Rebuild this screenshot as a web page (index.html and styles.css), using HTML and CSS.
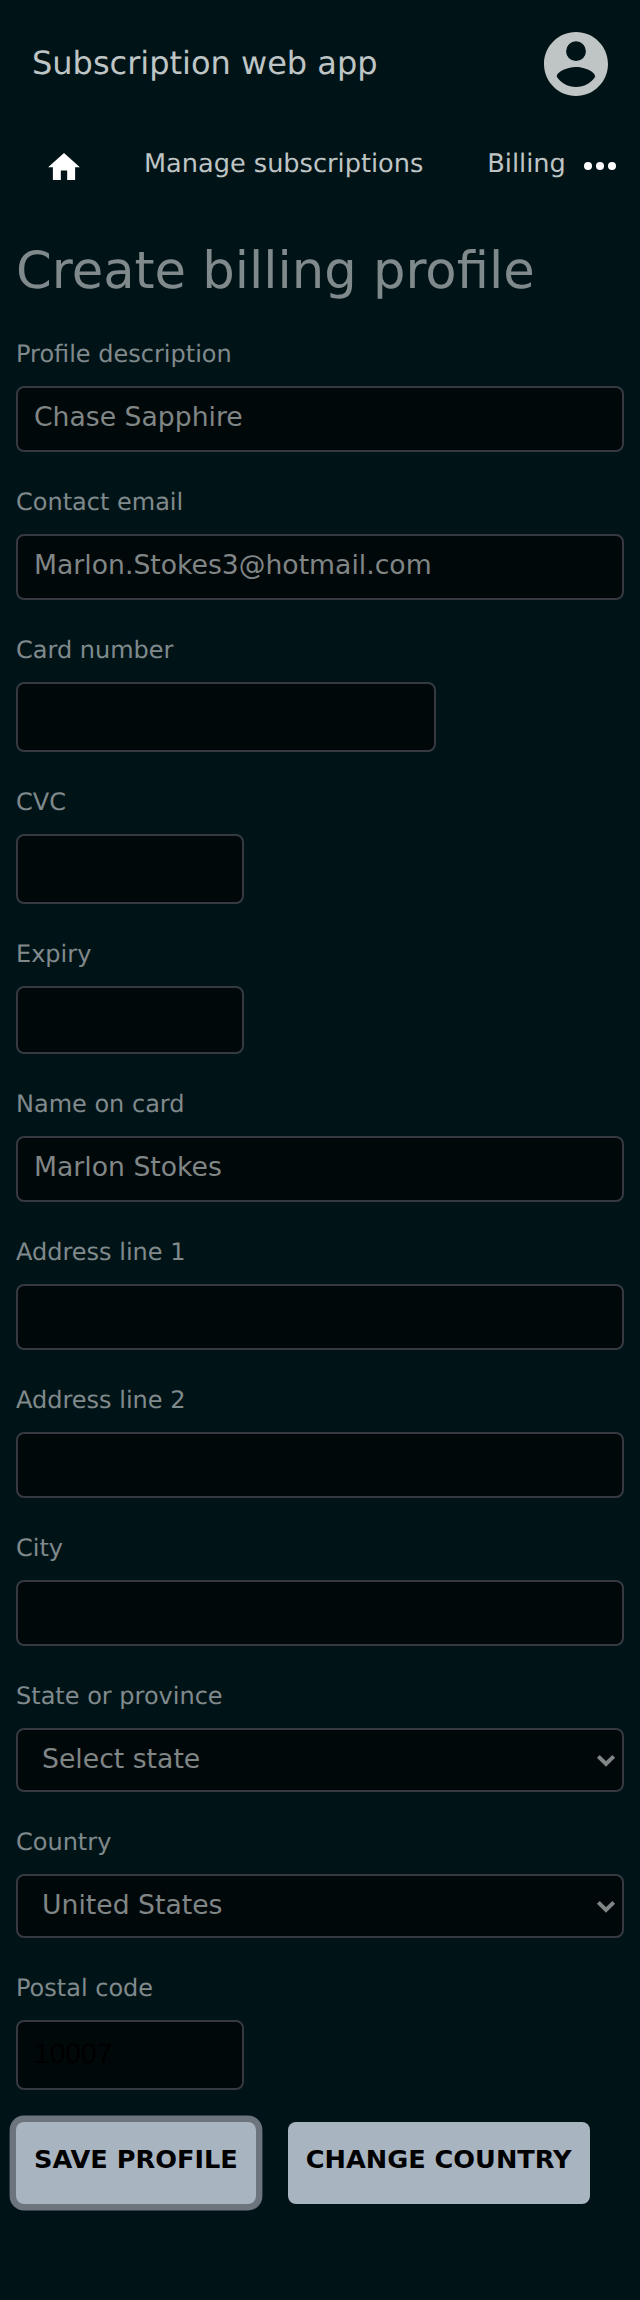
FILE: index.html
```html
<!DOCTYPE html>
<html lang="en">
<head>
<meta charset="utf-8">
<title>Create billing profile</title>
<link rel="stylesheet" href="styles.css">
</head>
<body>
<header class="header">
  <span class="brand">Subscription web app</span>
  <svg class="avatar" viewBox="2 2 20 20"><path d="M12 2C6.48 2 2 6.48 2 12s4.48 10 10 10 10-4.48 10-10S17.52 2 12 2zm0 2.9a3.1 3.1 0 1 1 0 6.2 3.1 3.1 0 0 1 0-6.2zm0 14.3c-2.5 0-4.71-1.28-6-3.22.03-1.99 4-3.08 6-3.08 1.99 0 5.97 1.09 6 3.08-1.29 1.94-3.5 3.22-6 3.22z"/></svg>
</header>
<nav class="nav">
  <svg class="home" viewBox="2 3 20 17"><path d="M10 20v-6h4v6h5v-8h3L12 3 2 12h3v8z"/></svg>
  <a class="link link-manage">Manage subscriptions</a>
  <a class="link">Billing</a>
  <svg class="more" viewBox="0 0 32 8"><circle cx="4" cy="4" r="4"/><circle cx="16" cy="4" r="4"/><circle cx="28" cy="4" r="4"/></svg>
</nav>
<main class="main">
  <h1 class="title">Create billing profile</h1>
  <form class="form">
    <label class="field">Profile description<input class="input" value="Chase Sapphire"></label>
    <label class="field">Contact email<input class="input" value="Marlon.Stokes3@hotmail.com"></label>
    <label class="field">Card number<span class="input hosted card"></span></label>
    <label class="field">CVC<span class="input hosted short"></span></label>
    <label class="field">Expiry<span class="input expiry short"></span></label>
    <label class="field">Name on card<input class="input" value="Marlon Stokes"></label>
    <label class="field">Address line 1<input class="input"></label>
    <label class="field">Address line 2<input class="input"></label>
    <label class="field">City<input class="input"></label>
    <label class="field">State or province
      <span class="select-wrap"><select class="input select"><option>Select state</option></select><svg class="chevron" viewBox="0 0 20 14"><path d="M2.3 2.3 10 10 17.7 2.3"/></svg></span>
    </label>
    <label class="field">Country
      <span class="select-wrap"><select class="input select"><option>United States</option></select><svg class="chevron" viewBox="0 0 20 14"><path d="M2.3 2.3 10 10 17.7 2.3"/></svg></span>
    </label>
    <label class="field">Postal code<span class="input hosted short postal">10007</span></label>
  </form>
  <div class="actions">
    <button class="button focused">SAVE PROFILE</button>
    <button class="button">CHANGE COUNTRY</button>
  </div>
</main>
</body>
</html>
```

FILE: styles.css
```css
* { box-sizing: border-box; }
body {
  margin: 0;
  min-height: 2300px;
  background: #001418;
  color: #808a8c;
  font-family: "DejaVu Sans", sans-serif;
  text-rendering: geometricPrecision;
}
.header {
  display: flex;
  align-items: center;
  justify-content: space-between;
  height: 128px;
  padding: 0 32px;
}
.brand { font-size: 32px; line-height: 40px; padding-bottom: 2px; color: #bfc4c5; }
.avatar { width: 64px; height: 64px; fill: #bfc4c5; }
.nav { display: flex; align-items: flex-start; height: 96px; padding: 16px 24px 0 48px; }
.home { width: 32px; height: 27px; margin: 9px 64px 0 0; fill: #fff; }
.link { font-size: 25.6px; line-height: 40px; color: #bfc4c5; white-space: nowrap; }
.link-manage { margin-right: 64px; }
.more { width: 32px; height: 8px; margin: 18px 0 0 auto; fill: #fff; }
.main { padding: 17px 16px 0; }
.title { margin: 0; height: 97px; font-size: 51.2px; font-weight: 400; line-height: 60px; }
.form { display: flex; flex-direction: column; gap: 34px; }
.field { display: flex; flex-direction: column; gap: 16px; font-size: 24px; line-height: 32px; }
.input {
  display: block;
  width: 100%;
  height: 66px;
  margin: 0;
  padding: 12px 16px 18px;
  border: 2px solid #363a40;
  border-radius: 8px;
  background: #00080a;
  color: #808585;
  font: 26.667px/32px "DejaVu Sans", sans-serif;
  outline: 0;
}
.hosted { height: 70px; }
.expiry { height: 68px; }
.card { width: 420px; }
.short { width: 228px; }
.postal { padding-top: 16px; color: #000; font-family: "Liberation Sans", sans-serif; font-size: 28.16px; }
.select-wrap { position: relative; display: block; }
.select { height: 64px; padding: 13px 24px 15px; appearance: none; }
.chevron {
  position: absolute;
  right: 8px;
  top: 26px;
  width: 20px;
  height: 14px;
  fill: none;
  stroke: #808585;
  stroke-width: 4;
}
.actions { display: flex; gap: 32px; margin-top: 32px; }
.button {
  height: 82px;
  padding: 0 18px 9px;
  border: 0;
  border-radius: 8px;
  background: #a8b4c0;
  color: #000;
  font: bold 25.6px/32px "DejaVu Sans", sans-serif;
  white-space: nowrap;
}
.focused { box-shadow: 0 0 0 6.4px #6c747d; }
```
